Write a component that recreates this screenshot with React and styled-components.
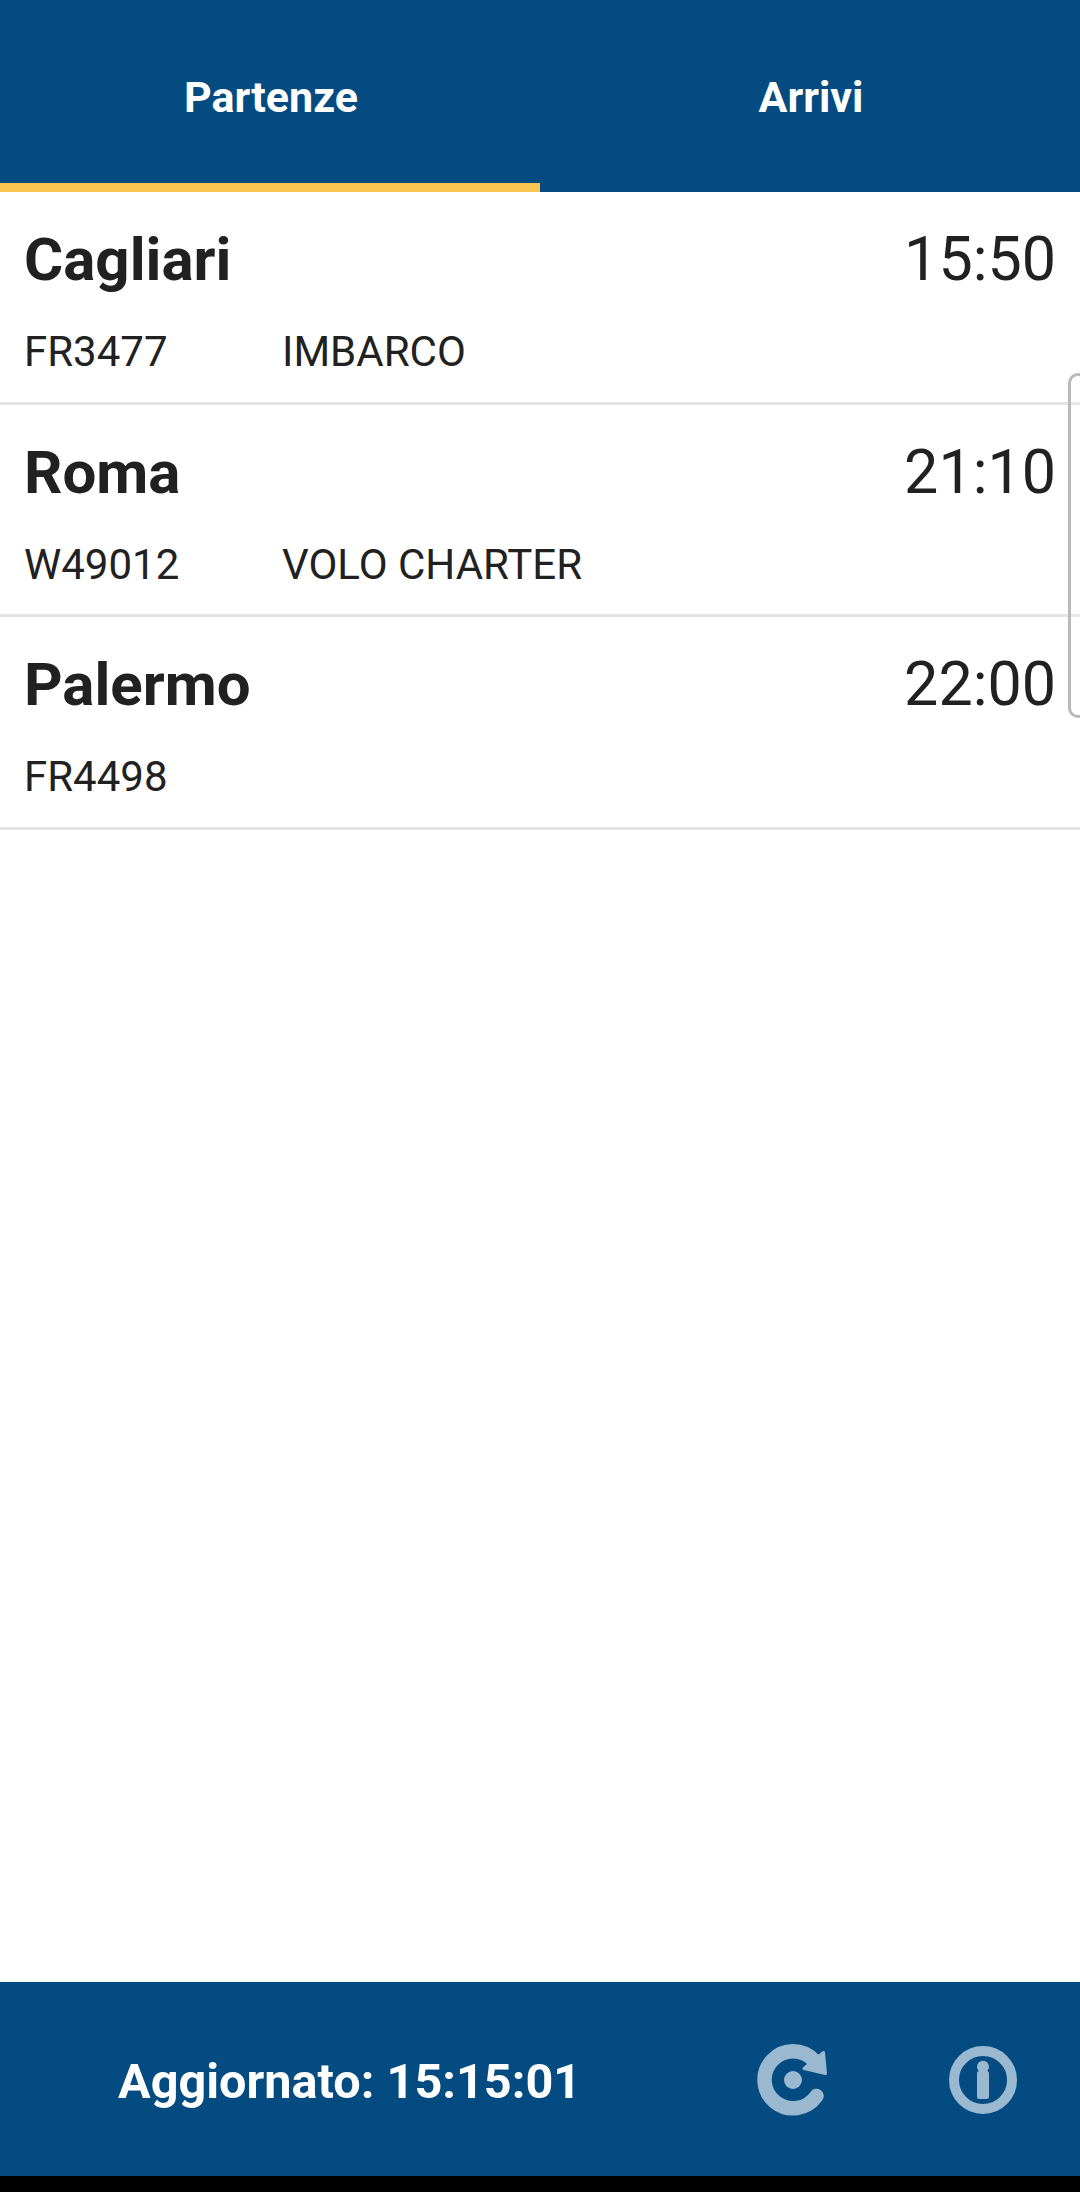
import React from "react";
import styled, { createGlobalStyle } from "styled-components";

const Global = createGlobalStyle`
  html, body { margin: 0; padding: 0; background: #fff; }
  body { font-family: Roboto, "Liberation Sans", sans-serif; }
`;

const Page = styled.div`
  position: relative;
  width: 1080px;
  height: 2192px;
  display: flex;
  flex-direction: column;
  overflow: hidden;
  background: #fff;
`;
const Tabs = styled.div`
  display: flex;
  height: 192px;
  background: #034b80;
`;
const Tab = styled.div`
  flex: 1;
  display: flex;
  align-items: center;
  justify-content: center;
  box-sizing: border-box;
  height: 192px;
  padding: 11px 0 0 2px;
  border-bottom: 9px solid ${(p) => (p.$active ? "#f9c550" : "transparent")};
  color: #fff;
  font-size: 43px;
  font-weight: 700;
`;
const List = styled.div`
  flex: 1;
  display: flex;
  flex-direction: column;
`;
const Row = styled.div`
  box-sizing: border-box;
  height: 212.67px;
  padding: 32px 24px 0;
  border-bottom: 3px solid #e4e4e4;
  color: #212121;
`;
const TopLine = styled.div`
  display: flex;
  justify-content: space-between;
  align-items: baseline;
  line-height: 70px;
`;
const City = styled.div`
  font-size: 60px;
  font-weight: 700;
`;
const Time = styled.div`
  font-size: 61px;
  font-weight: 400;
`;
const SubLine = styled.div`
  display: flex;
  margin-top: 32px;
  font-size: 42px;
  line-height: 50px;
`;
const Flight = styled.div`
  width: 258px;
`;
const Footer = styled.div`
  display: flex;
  align-items: center;
  box-sizing: border-box;
  height: 194px;
  padding: 2px 57px 0 118px;
  background: #034b80;
`;
const Updated = styled.div`
  color: #fff;
  font-size: 48.6px;
  font-weight: 700;
  margin: 2px auto 0 0;
`;
const Icons = styled.div`
  display: flex;
  gap: 110px;
`;
const Icon = styled.svg`
  display: block;
  width: 80px;
  height: 80px;
`;
const NavBar = styled.div`
  height: 16px;
  background: #000;
`;
const EdgeHandle = styled.div`
  position: absolute;
  top: 373px;
  left: 1068px;
  width: 20px;
  height: 345px;
  box-sizing: border-box;
  border: 3px solid #b9b9b9;
  border-radius: 12px;
  background: rgba(255, 255, 255, 0.15);
`;

const ICON = "#9ab8d0";

const RefreshIcon = () => (
  <Icon viewBox="0 0 80 80" aria-label="Aggiorna">
    <path d="M61 20.5 A28.5 28.5 0 1 0 63.5 56" fill="none" stroke={ICON} strokeWidth="14.5" strokeLinecap="round" />
    <path d="M70.5 12.5 L72.5 33.5 L51 28.5 Z" fill={ICON} stroke={ICON} strokeWidth="3" strokeLinejoin="round" />
    <circle cx="40" cy="40" r="9" fill={ICON} />
  </Icon>
);

const InfoIcon = () => (
  <Icon viewBox="0 0 80 80" aria-label="Info">
    <circle cx="40" cy="40" r="29" fill="none" stroke={ICON} strokeWidth="10" />
    <circle cx="40" cy="26.7" r="6" fill={ICON} />
    <rect x="34" y="31" width="12" height="28" rx="2.5" fill={ICON} />
  </Icon>
);

const flights = [
  { city: "Cagliari", time: "15:50", code: "FR3477", status: "IMBARCO" },
  { city: "Roma", time: "21:10", code: "W49012", status: "VOLO CHARTER" },
  { city: "Palermo", time: "22:00", code: "FR4498", status: "" },
];

export default function App() {
  return (
    <Page>
      <Global />
      <Tabs>
        <Tab $active>Partenze</Tab>
        <Tab>Arrivi</Tab>
      </Tabs>
      <List>
        {flights.map((f) => (
          <Row key={f.code}>
            <TopLine>
              <City>{f.city}</City>
              <Time>{f.time}</Time>
            </TopLine>
            <SubLine>
              <Flight>{f.code}</Flight>
              <div>{f.status}</div>
            </SubLine>
          </Row>
        ))}
      </List>
      <Footer>
        <Updated>Aggiornato: 15:15:01</Updated>
        <Icons>
          <RefreshIcon />
          <InfoIcon />
        </Icons>
      </Footer>
      <NavBar />
      <EdgeHandle />
    </Page>
  );
}
